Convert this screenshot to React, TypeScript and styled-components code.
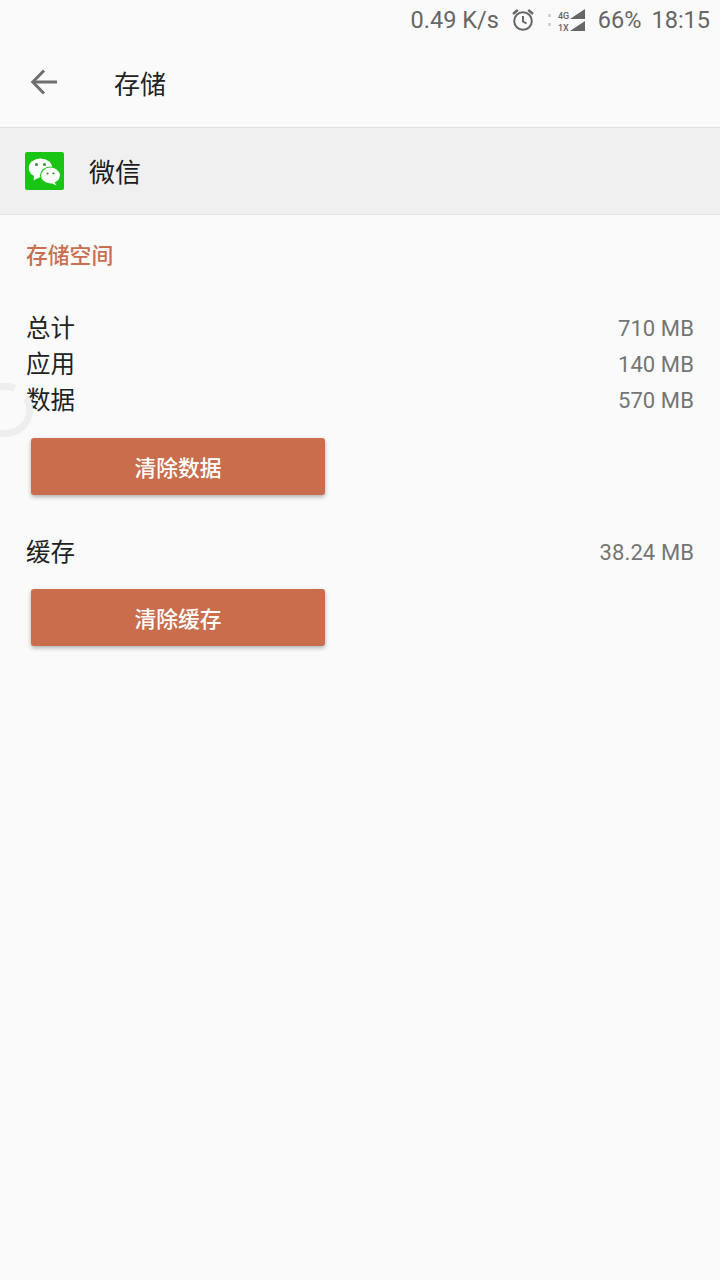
import React from 'react';
import styled, { createGlobalStyle } from 'styled-components';

const GlobalStyle = createGlobalStyle`
  html, body {
    margin: 0;
    padding: 0;
    background: #fafafa;
  }
  body {
    font-family: Roboto, "Noto Sans CJK SC", sans-serif;
  }
`;

const Page = styled.div`
  position: relative;
  width: 720px;
  height: 1280px;
  overflow: hidden;
  background: #fafafa;
`;

const StatusBar = styled.div`
  display: flex;
  align-items: center;
  justify-content: flex-end;
  height: 40px;
  padding-right: 10px;
  color: #666;
  font-size: 23.5px;
`;

const Speed = styled.span`
  margin-right: 12px;
`;

const NetworkBlock = styled.svg`
  margin: 0 13px 0 13px;
`;

const Clock = styled.span`
  margin-left: 10px;
`;

const Toolbar = styled.div`
  display: flex;
  align-items: center;
  height: 87px;
  padding: 0 0 3px 30px;
  box-sizing: border-box;
`;

const Title = styled.h1`
  margin: 0 0 0 56px;
  font-size: 26px;
  font-weight: 400;
  color: #222;
`;

const AppRow = styled.div`
  display: flex;
  align-items: center;
  height: 88px;
  padding-left: 25px;
  box-sizing: border-box;
  background: #f0f0f0;
  border-top: 1px solid #e2e2e2;
  border-bottom: 1px solid #e2e2e2;
`;

const AppName = styled.span`
  margin-left: 25px;
  padding-bottom: 2px;
  font-size: 26px;
  color: #1c1c1c;
`;

const Content = styled.div`
  display: flex;
  flex-direction: column;
  padding: 0 26px;
`;

const SectionTitle = styled.h2`
  margin: 26px 0 39px;
  height: 30px;
  line-height: 30px;
  font-size: 21.8px;
  font-weight: 500;
  color: #c76f4e;
`;

const SizeRow = styled.div`
  display: flex;
  align-items: center;
  justify-content: space-between;
  height: 36px;
`;

const SizeLabel = styled.span`
  padding-bottom: 3px;
  font-size: 24.5px;
  color: #222;
`;

const SizeValue = styled.span`
  font-size: 22px;
  letter-spacing: 0.1px;
  color: #757575;
`;

const ClearButton = styled.button<{ $top: number; $bottom: number }>`
  display: block;
  width: 294px;
  height: 57px;
  margin: ${(props) => props.$top}px 0 ${(props) => props.$bottom}px 5px;
  padding: 0 0 1px;
  border: none;
  border-radius: 3px;
  background: #c96d4d;
  box-shadow: 0 2px 4px rgba(0, 0, 0, 0.3);
  color: #fff;
  font-family: inherit;
  font-size: 21.8px;
  font-weight: 500;
`;

const Spinner = styled.svg`
  position: absolute;
  left: -21px;
  top: 383px;
`;

const SpinnerIcon = () => (
  <Spinner width="54" height="54" viewBox="0 0 54 54" fill="none">
    <circle
      cx="27"
      cy="27"
      r="23.5"
      stroke="#eeeeee"
      strokeWidth="7"
      strokeDasharray="131.25 16.4"
      transform="rotate(-30 27 27)"
    />
  </Spinner>
);

const ClockIcon = () => (
  <svg width="24" height="24" viewBox="0 0 24 24" fill="none" stroke="#666" strokeWidth="2">
    <circle cx="12" cy="13" r="8.8" />
    <path d="M12 8v5.5l3.5 2" />
    <path d="M2 6 L6.8 2 M22 6 L17.2 2" strokeWidth="2.4" />
  </svg>
);

const NetworkIcon = () => (
  <NetworkBlock width="37" height="24" viewBox="0 0 37 24">
    <rect x="0" y="6" width="3" height="3" fill="#d4d4d4" />
    <rect x="0" y="15" width="3" height="3" fill="#d4d4d4" />
    <text x="10" y="11" fontSize="9" fontWeight="500" fontFamily="Roboto, sans-serif" fill="#666">4G</text>
    <text x="10" y="23" fontSize="9" fontWeight="500" fontFamily="Roboto, sans-serif" fill="#666">1X</text>
    <polygon points="22,11 37,11 37,1" fill="#666" />
    <polygon points="22,23 37,23 37,13" fill="#666" />
  </NetworkBlock>
);

const BackIcon = () => (
  <svg width="28" height="28" viewBox="0 0 28 28" fill="none" stroke="#6f6f6f" strokeWidth="3">
    <path d="M27 14H3" />
    <path d="M14 2.5 2.8 14 14 25.5" />
  </svg>
);

const WeChatLogo = () => (
  <svg width="39" height="38" viewBox="0 0 39 38">
    <rect width="39" height="38" rx="2" fill="#19c414" />
    <ellipse cx="15.5" cy="16" rx="11.8" ry="9.4" fill="#fff" />
    <path d="M9 23 8.5 28.5 15 25Z" fill="#fff" />
    <ellipse cx="25.5" cy="23.5" rx="10.6" ry="9" fill="#19c414" />
    <ellipse cx="25.5" cy="23.5" rx="9.4" ry="7.9" fill="#fff" />
    <path d="M29 29 31.5 33.5 25 30.5Z" fill="#fff" />
    <circle cx="11.5" cy="12.5" r="1.5" fill="#3d8a30" />
    <circle cx="19.5" cy="12.5" r="1.5" fill="#3d8a30" />
    <circle cx="22.5" cy="21.5" r="1.1" fill="#3d8a30" />
    <circle cx="28.5" cy="21.5" r="1.1" fill="#3d8a30" />
  </svg>
);

const App = () => (
  <Page>
    <GlobalStyle />
    <SpinnerIcon />
    <StatusBar>
      <Speed>0.49 K/s</Speed>
      <ClockIcon />
      <NetworkIcon />
      <span>66%</span>
      <Clock>18:15</Clock>
    </StatusBar>
    <Toolbar>
      <BackIcon />
      <Title>存储</Title>
    </Toolbar>
    <AppRow>
      <WeChatLogo />
      <AppName>微信</AppName>
    </AppRow>
    <Content>
      <SectionTitle>存储空间</SectionTitle>
      <SizeRow>
        <SizeLabel>总计</SizeLabel>
        <SizeValue>710 MB</SizeValue>
      </SizeRow>
      <SizeRow>
        <SizeLabel>应用</SizeLabel>
        <SizeValue>140 MB</SizeValue>
      </SizeRow>
      <SizeRow>
        <SizeLabel>数据</SizeLabel>
        <SizeValue>570 MB</SizeValue>
      </SizeRow>
      <ClearButton $top={20} $bottom={39}>清除数据</ClearButton>
      <SizeRow>
        <SizeLabel>缓存</SizeLabel>
        <SizeValue>38.24 MB</SizeValue>
      </SizeRow>
      <ClearButton $top={19} $bottom={0}>清除缓存</ClearButton>
    </Content>
  </Page>
);

export default App;
